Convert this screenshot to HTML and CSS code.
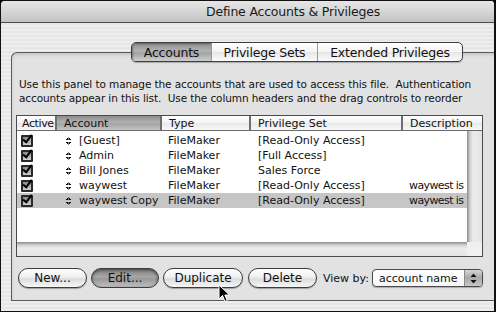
FILE: index.html
```html
<!DOCTYPE html>
<html lang="en">

<head>
    <meta charset="UTF-8">
    <title>Define Accounts &amp; Privileges</title>
    <link rel="stylesheet" href="styles.css">
</head>

<body>
    <div class="window">
        <div class="titlebar"><span class="title">Define Accounts &amp; Privileges</span></div>

        <div class="content">
            <div class="tabs">
                <span class="tab selected">Accounts</span>
                <span class="tab">Privilege Sets</span>
                <span class="tab">Extended Privileges</span>
            </div>

            <div class="panel">
                <p class="intro">Use this panel to manage the accounts that are used to access this file.&nbsp; Authentication<br>accounts appear in this list.&nbsp; Use the column headers and the drag controls to reorder</p>

                <div class="list">
                    <div class="head">
                        <span class="col c-active">Active</span>
                        <span class="col c-account sorted">Account</span>
                        <span class="col c-type">Type</span>
                        <span class="col c-priv">Privilege Set</span>
                        <span class="col c-desc">Description</span>
                    </div>
                    <div class="rows">
                        <div class="row">
                            <span class="cell c-active"><span class="check"></span></span>
                            <span class="cell c-account"><span class="drag"></span>[Guest]</span>
                            <span class="cell c-type">FileMaker</span>
                            <span class="cell c-priv">[Read-Only Access]</span>
                            <span class="cell c-desc"></span>
                        </div>
                        <div class="row">
                            <span class="cell c-active"><span class="check"></span></span>
                            <span class="cell c-account"><span class="drag"></span>Admin</span>
                            <span class="cell c-type">FileMaker</span>
                            <span class="cell c-priv">[Full Access]</span>
                            <span class="cell c-desc"></span>
                        </div>
                        <div class="row">
                            <span class="cell c-active"><span class="check"></span></span>
                            <span class="cell c-account"><span class="drag"></span>Bill Jones</span>
                            <span class="cell c-type">FileMaker</span>
                            <span class="cell c-priv">Sales Force</span>
                            <span class="cell c-desc"></span>
                        </div>
                        <div class="row">
                            <span class="cell c-active"><span class="check"></span></span>
                            <span class="cell c-account"><span class="drag"></span>waywest</span>
                            <span class="cell c-type">FileMaker</span>
                            <span class="cell c-priv">[Read-Only Access]</span>
                            <span class="cell c-desc">waywest is</span>
                        </div>
                        <div class="row selected">
                            <span class="cell c-active"><span class="check"></span></span>
                            <span class="cell c-account"><span class="drag"></span>waywest Copy</span>
                            <span class="cell c-type">FileMaker</span>
                            <span class="cell c-priv">[Read-Only Access]</span>
                            <span class="cell c-desc">waywest is</span>
                        </div>
                    </div>
                    <div class="vscroll"></div>
                    <div class="hscroll"></div>
                    <div class="corner"></div>
                </div>

                <div class="actions">
                    <button class="btn">New...</button>
                    <button class="btn pressed">Edit...</button>
                    <button class="btn">Duplicate</button>
                    <button class="btn">Delete</button>
                    <span class="view-label">View by:</span>
                    <div class="popup">
                        <span class="popup-text">account name</span>
                        <span class="stepper">
                            <svg width="7" height="11" viewBox="0 0 7 11">
                                <path d="M3.5 0.5 L6.5 4 L0.5 4 Z M3.5 10.5 L6.5 7 L0.5 7 Z" fill="#111" />
                            </svg>
                        </span>
                    </div>
                </div>
            </div>
        </div>

        <svg class="cursor" width="13" height="19" viewBox="0 0 13 19">
            <path d="M1 1 L1 15 L4.5 11.5 L7 17.5 L9.2 16.5 L6.8 11 L11.5 11 Z" fill="#000" stroke="#fff" stroke-width="1" stroke-linejoin="round" />
        </svg>
    </div>
</body>

</html>
```

FILE: styles.css
```css
html,
body {
    margin: 0;
    padding: 0;
}

body {
    width: 496px;
    height: 312px;
    overflow: hidden;
    background-color: #000;
    font-family: "DejaVu Sans", sans-serif;
    color: #111;
}

.window {
    position: relative;
    box-sizing: border-box;
    width: 496px;
    height: 312px;
    border: 1px solid #111;
    border-right-width: 2px;
    border-radius: 5px 5px 0 0;
    overflow: hidden;
    background: repeating-linear-gradient(#eeeeee 0px, #eeeeee 2px, #e6e6e6 2px, #e6e6e6 4px);
}

.titlebar {
    height: 21px;
    border-bottom: 1px solid #4a4a4a;
    background: linear-gradient(#e6e6e6, #d2d2d2 60%, #c2c2c2);
    display: flex;
    align-items: center;
    padding-left: 205px;
}

.title {
    font-size: 12.5px;
    color: #1a1a1a;
    letter-spacing: -0.2px;
}

.content {
    display: flex;
    flex-direction: column;
}

/* segmented tab control */
.tabs {
    position: relative;
    z-index: 1;
    display: flex;
    align-self: flex-start;
    margin-top: 19px;
    margin-left: 130px;
    height: 18px;
    border: 1px solid #3e3e3e;
    border-radius: 5px;
    overflow: hidden;
    background: linear-gradient(#ffffff, #f4f4f4 50%, #e6e6e6 52%, #fbfbfb);
    box-shadow: 0 1px 1px rgba(0, 0, 0, 0.25);
}

.tab {
    display: flex;
    align-items: center;
    justify-content: center;
    font-size: 12.5px;
    letter-spacing: -0.2px;
    border-left: 1px solid #9a9a9a;
}

.tab:nth-child(1) {
    width: 79px;
    border-left: none;
}

.tab:nth-child(2) {
    width: 105px;
}

.tab:nth-child(3) {
    width: 144px;
}

.tab.selected {
    background: linear-gradient(#8e8e8e, #b4b4b4 45%, #a2a2a2 55%, #cfcfcf);
    box-shadow: inset 1px 1px 2px rgba(0, 0, 0, 0.35);
}

.panel {
    margin-top: -10px;
    margin-left: 10px;
    margin-right: -12px;
    height: 249px;
    border: 1px solid #5a5a5a;
    border-right: none;
    border-radius: 6px 0 0 0;
    background: #e2e2e2;
    box-shadow: inset 0 2px 3px rgba(0, 0, 0, 0.12);
    padding: 24px 0 0 4px;
    box-sizing: border-box;
}

.intro {
    margin: 0 0 10px 3px;
    font-size: 10.5px;
    line-height: 14px;
    white-space: nowrap;
    letter-spacing: -0.1px;
}

/* account list */
.list {
    width: 467px;
    height: 142px;
    box-sizing: border-box;
    border: 1px solid #4a4a4a;
    display: grid;
    grid-template-columns: 450px 15px;
    grid-template-rows: 15px 1fr 14px;
    background: #fff;
}

.head {
    grid-column: 1 / 3;
    display: flex;
    border-bottom: 1px solid #6a6a6a;
    background: linear-gradient(#ffffff, #f2f2f2 50%, #e8e8e8 52%, #f8f8f8);
    font-size: 11px;
}

.col {
    display: flex;
    align-items: center;
    box-sizing: border-box;
    border-right: 2px solid #6e6e6e;
    padding-left: 7px;
}

.head .c-active {
    padding-left: 5px;
    letter-spacing: -0.4px;
}

.c-active {
    width: 40px;
}

.c-account {
    width: 105px;
}

.c-type {
    width: 89px;
}

.c-priv {
    width: 152px;
}

.c-desc {
    flex: 1;
}

.head .c-desc {
    border-right: none;
}

.col.sorted {
    background: linear-gradient(#8c8c8c, #b2b2b2 45%, #a4a4a4 55%, #c4c4c4);
}

.rows {
    padding-top: 2px;
    overflow: hidden;
    font-size: 11px;
}

.row {
    display: flex;
    height: 15px;
    align-items: center;
    white-space: nowrap;
}

.row.selected {
    background: #c6c6c6;
}

.cell {
    box-sizing: border-box;
    display: flex;
    align-items: center;
}

.cell.c-active {
    padding-left: 4px;
}

.cell.c-account {
    padding-left: 9px;
}

.cell.c-type {
    padding-left: 6px;
}

.cell.c-priv {
    padding-left: 7px;
}

.cell.c-desc {
    padding-left: 6px;
    flex: 0 0 auto;
    width: 64px;
    letter-spacing: -0.6px;
}

.check {
    position: relative;
    width: 8px;
    height: 8px;
    border: 2px solid #2a2a2a;
    border-radius: 1px;
    background: linear-gradient(#8a8a8a, #cfcfcf);
}

.check::after {
    content: "";
    position: absolute;
    left: 2px;
    top: -4px;
    width: 3px;
    height: 8px;
    border-right: 2px solid #000;
    border-bottom: 2px solid #000;
    transform: rotate(38deg);
}

.drag {
    width: 5px;
    height: 8px;
    margin-right: 8px;
    background:
        linear-gradient(to bottom right, transparent 50%, #111 50%) 0 0 / 2.5px 3px no-repeat,
        linear-gradient(to bottom left, transparent 50%, #111 50%) 2.5px 0 / 2.5px 3px no-repeat,
        linear-gradient(to top right, transparent 50%, #111 50%) 0 5px / 2.5px 3px no-repeat,
        linear-gradient(to top left, transparent 50%, #111 50%) 2.5px 5px / 2.5px 3px no-repeat;
}

.vscroll {
    grid-column: 2;
    grid-row: 2;
    background: linear-gradient(to right, #8a8a8a, #d0d0d0 3px, #ececec 6px, #e4e4e4);
}

.hscroll {
    grid-column: 1;
    grid-row: 3;
    background: linear-gradient(#8a8a8a, #d0d0d0 3px, #ececec 6px, #e4e4e4);
}

.corner {
    grid-column: 2;
    grid-row: 3;
    background: #f0f0f0;
}

/* buttons row */
.actions {
    display: flex;
    align-items: center;
    margin-top: 11px;
    margin-left: 2px;
    gap: 4px;
}

.btn {
    height: 20px;
    padding: 0;
    border: 1px solid #3c3c3c;
    border-radius: 10px;
    background: linear-gradient(#ffffff, #efefef 45%, #dcdcdc 55%, #f6f6f6);
    box-shadow: 0 1px 1px rgba(0, 0, 0, 0.3);
    font-family: "DejaVu Sans", sans-serif;
    font-size: 12px;
    color: #111;
}

.btn:nth-child(1) {
    width: 69px;
}

.btn:nth-child(2) {
    width: 68px;
}

.btn:nth-child(3) {
    width: 80px;
}

.btn:nth-child(4) {
    width: 69px;
    margin-left: 1px;
}

.btn.pressed {
    background: linear-gradient(#7e7e7e, #a8a8a8 45%, #989898 55%, #c0c0c0);
    box-shadow: inset 0 1px 3px rgba(0, 0, 0, 0.5);
}

.view-label {
    margin-left: 2px;
    font-size: 11px;
}

.popup {
    display: flex;
    align-items: center;
    width: 111px;
    height: 18px;
    margin-left: -1px;
    box-sizing: border-box;
    border: 1px solid #4a4a4a;
    border-radius: 4px;
    overflow: hidden;
    background: linear-gradient(#ffffff, #f6f6f6);
    box-shadow: 0 1px 1px rgba(0, 0, 0, 0.25);
    font-size: 11px;
}

.popup-text {
    flex: 1;
    padding-left: 6px;
    white-space: nowrap;
}

.stepper {
    width: 17px;
    height: 100%;
    display: flex;
    align-items: center;
    justify-content: center;
    background: linear-gradient(#d4d4d4, #a8a8a8 50%, #c8c8c8);
    border-left: 1px solid #8a8a8a;
}

.cursor {
    position: absolute;
    left: 217px;
    top: 283px;
}
```
